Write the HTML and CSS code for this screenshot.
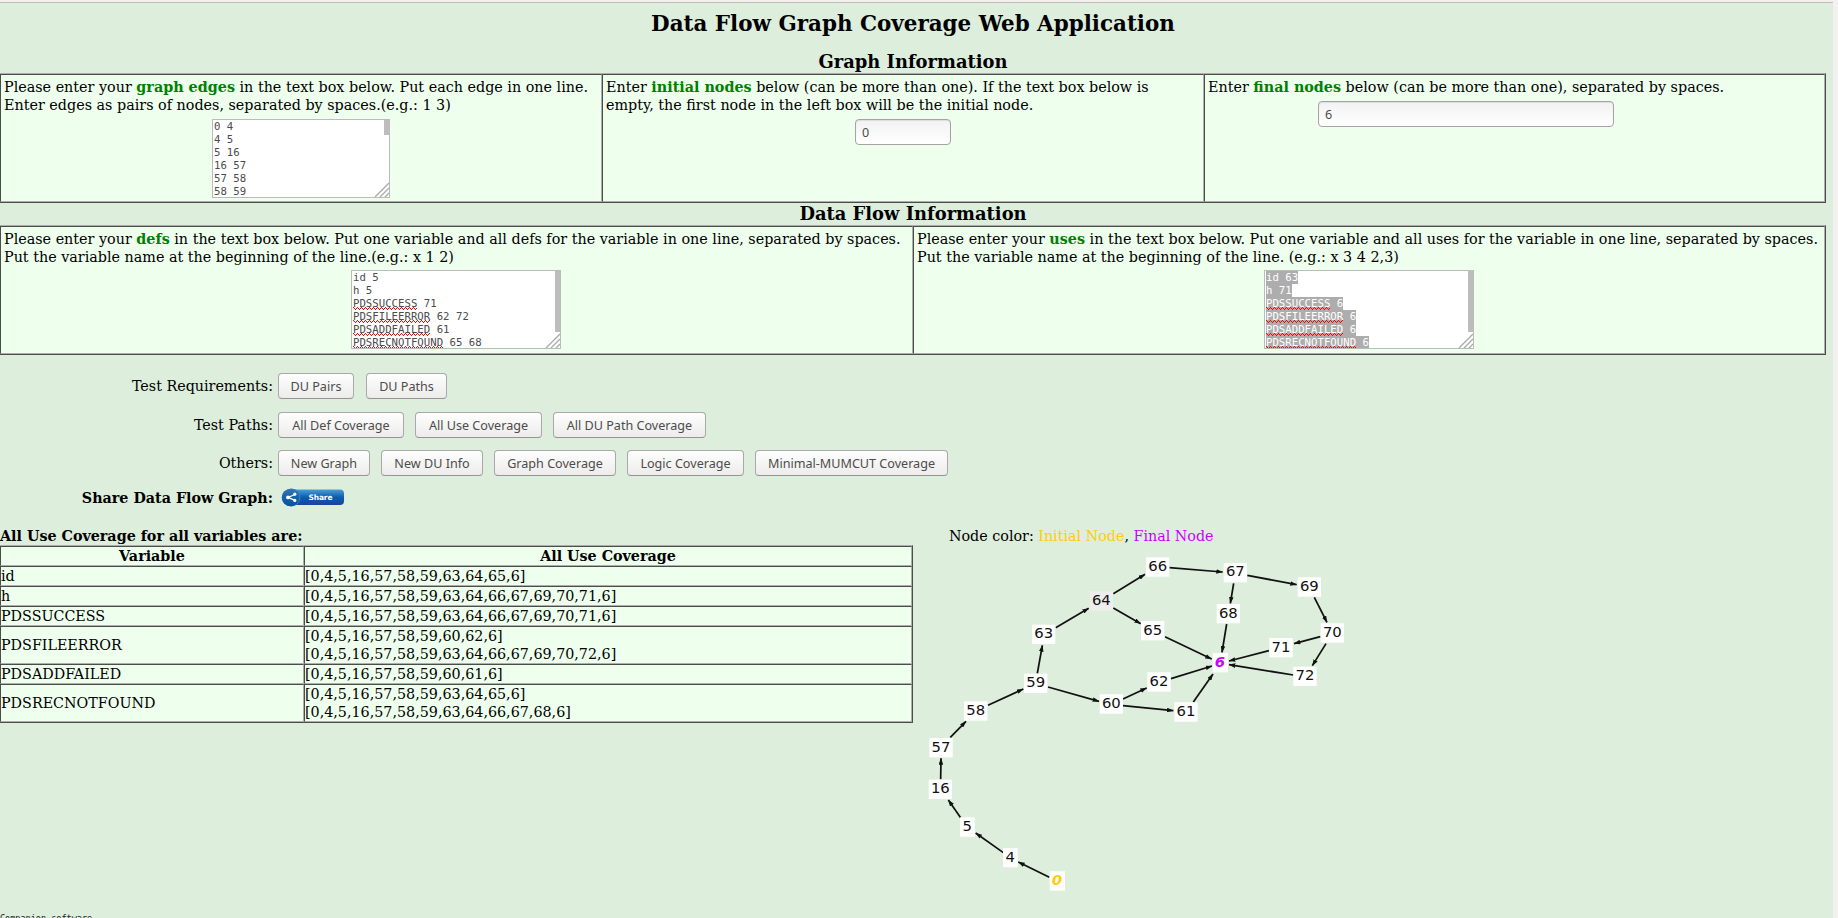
FILE: index.html
```html
<!DOCTYPE html>
<html lang="en">
<head>
<meta charset="utf-8">
<title>Data Flow Graph Coverage Web Application</title>
<link rel="stylesheet" href="styles.css">
</head>
<body>
<div class="window">
<main class="page">
  <h2 class="title">Data Flow Graph Coverage Web Application</h2>
  <h3 class="section graph-title">Graph Information</h3>
  <table class="grid inputs">
    <colgroup><col class="c-edges"><col class="c-init"><col></colgroup>
    <tr>
      <td>Please enter your <b class="key">graph edges</b> in the text box below. Put each edge in one line.<br>Enter edges as pairs of nodes, separated by spaces.(e.g.: 1 3)
        <div class="area edges"><div>0 4</div><div>4 5</div><div>5 16</div><div>16 57</div><div>57 58</div><div>58 59</div><i class="thumb short"></i><svg class="grip" viewBox="0 0 15 15"><path d="M1 15L15 1M6 15l9-9M11 15l4-4"/></svg></div></td>
      <td>Enter <b class="key">initial nodes</b> below (can be more than one). If the text box below is<br>empty, the first node in the left box will be the initial node.
        <div class="field init">0</div></td>
      <td>Enter <b class="key">final nodes</b> below (can be more than one), separated by spaces.
        <div class="field final">6</div></td>
    </tr>
  </table>
  <h3 class="section flow-title">Data Flow Information</h3>
  <table class="grid inputs">
    <colgroup><col class="c-defs"><col></colgroup>
    <tr>
      <td>Please enter your <b class="key">defs</b> in the text box below. Put one variable and all defs for the variable in one line, separated by spaces.<br>Put the variable name at the beginning of the line.(e.g.: x 1 2)
        <div class="area defs"><div>id 5</div><div>h 5</div><div><u>PDSSUCCESS</u> 71</div><div><u>PDSFILEERROR</u> 62 72</div><div><u>PDSADDFAILED</u> 61</div><div><u>PDSRECNOTFOUND</u> 65 68</div><i class="thumb"></i><svg class="grip" viewBox="0 0 15 15"><path d="M1 15L15 1M6 15l9-9M11 15l4-4"/></svg></div></td>
      <td>Please enter your <b class="key">uses</b> in the text box below. Put one variable and all uses for the variable in one line, separated by spaces.<br>Put the variable name at the beginning of the line. (e.g.: x 3 4 2,3)
        <div class="area uses"><div><span>id 63</span></div><div><span>h 71</span></div><div><span><u>PDSSUCCESS</u> 6</span></div><div><span><u>PDSFILEERROR</u> 6</span></div><div><span><u>PDSADDFAILED</u> 6</span></div><div><span><u>PDSRECNOTFOUND</u> 6</span></div><i class="thumb"></i><svg class="grip" viewBox="0 0 15 15"><path d="M1 15L15 1M6 15l9-9M11 15l4-4"/></svg></div></td>
    </tr>
  </table>

  <div class="actions">
    <div class="row r1"><span class="label">Test Requirements:</span><button class="w76">DU Pairs</button><button class="w81 wide-gap">DU Paths</button></div>
    <div class="row r2"><span class="label">Test Paths:</span><button class="w126">All Def Coverage</button><button class="w127">All Use Coverage</button><button class="w153">All DU Path Coverage</button></div>
    <div class="row r3"><span class="label">Others:</span><button class="w92">New Graph</button><button class="w102">New DU Info</button><button class="w122">Graph Coverage</button><button class="w117">Logic Coverage</button><button class="w193">Minimal-MUMCUT Coverage</button></div>
    <div class="row r4"><b class="label">Share Data Flow Graph:</b>
      <svg class="share" width="64" height="19" viewBox="0 0 64 19">
        <defs><linearGradient id="blue" x1="0" y1="0" x2="0" y2="1"><stop offset="0" stop-color="#4a9fd6"/><stop offset=".5" stop-color="#0c5cae"/><stop offset="1" stop-color="#1a449c"/></linearGradient>
        <linearGradient id="disc" x1="0" y1="0" x2="0" y2="1"><stop offset="0" stop-color="#3d74b5"/><stop offset=".45" stop-color="#1263ae"/><stop offset="1" stop-color="#0f4ea2"/></linearGradient></defs>
        <rect x="6" y="1.5" width="57" height="15.5" rx="4" fill="url(#blue)"/>
        <circle cx="10.5" cy="9.5" r="9" fill="#2c80c4"/><circle cx="9.5" cy="9.5" r="8.8" fill="url(#disc)"/>
        <path d="M14.5 6.2L7 9.4 14.5 12.6" stroke="#fff" stroke-width="1.2" fill="none"/><circle cx="13.8" cy="6.2" r="1.6" fill="#fff"/><circle cx="7" cy="9.4" r="1.9" fill="#fff"/><circle cx="13.8" cy="12.4" r="1.6" fill="#fff"/>
        <text x="27.5" y="11.5" textLength="24">Share</text>
      </svg></div>
  </div>

  <div class="results">
    <section class="coverage">
      <b class="caption">All Use Coverage for all variables are:</b>
      <table class="grid paths">
        <colgroup><col class="c-var"><col></colgroup>
        <tr><th>Variable</th><th>All Use Coverage</th></tr>
        <tr><td>id</td><td>[0,4,5,16,57,58,59,63,64,65,6]</td></tr>
        <tr><td>h</td><td>[0,4,5,16,57,58,59,63,64,66,67,69,70,71,6]</td></tr>
        <tr><td>PDSSUCCESS</td><td>[0,4,5,16,57,58,59,63,64,66,67,69,70,71,6]</td></tr>
        <tr><td>PDSFILEERROR</td><td>[0,4,5,16,57,58,59,60,62,6]<br>[0,4,5,16,57,58,59,63,64,66,67,69,70,72,6]</td></tr>
        <tr><td>PDSADDFAILED</td><td>[0,4,5,16,57,58,59,60,61,6]</td></tr>
        <tr><td>PDSRECNOTFOUND</td><td>[0,4,5,16,57,58,59,63,64,65,6]<br>[0,4,5,16,57,58,59,63,64,66,67,68,6]</td></tr>
      </table>
    </section>
    <section class="graph">
      <div class="legend">Node color: <span class="gold">Initial Node</span>, <span class="violet">Final Node</span></div>
      <svg class="canvas" width="446" height="368" viewBox="42 105 1338 1104">
        <defs><marker id="tip" viewBox="0 0 20 14" refX="19" refY="7" markerWidth="20" markerHeight="14" markerUnits="userSpaceOnUse" orient="auto"><path d="M0 0L20 7L0 14Z" fill="#111"/></marker></defs>
        <g class="edge">
          <path d="M640 236L735 178"/><path d="M808 158L968 171"/><path d="M1042 181L1190 209"/><path d="M1001 205L991 265"/>
          <path d="M980 327L966 412"/><path d="M1243 247L1281 322"/><path d="M1261 365L1182 386"/><path d="M1278 386L1237 452"/>
          <path d="M1107 407L987 438"/><path d="M1180 480L987 449"/><path d="M795 365L935 432"/><path d="M640 279L722 326"/>
          <path d="M467 338L566 280"/><path d="M412 475L427 391"/><path d="M444 516L597 559"/><path d="M669 552L740 519"/>
          <path d="M669 572L820 587"/><path d="M813 491L936 453"/><path d="M880 561L939 477"/><path d="M264 571L370 522"/>
          <path d="M151 667L198 619"/><path d="M122 793L123 730"/><path d="M182 908L145 855"/><path d="M310 1013L227 954"/><path d="M448 1087L355 1041"/>
        </g>
        <g class="box">
          <rect x="738" y="127" width="70" height="58"/><rect x="971" y="144" width="70" height="58"/><rect x="1193" y="187" width="70" height="58"/>
          <rect class="hover" x="569" y="229" width="70" height="58"/><rect x="950" y="267" width="70" height="58"/><rect x="723" y="318" width="70" height="58"/>
          <rect x="396" y="329" width="70" height="58"/><rect x="1262" y="325" width="70" height="58"/><rect x="1108" y="369" width="70" height="58"/>
          <rect x="938" y="414" width="46" height="58"/><rect x="742" y="472" width="70" height="58"/><rect x="1180" y="455" width="70" height="58"/>
          <rect x="372" y="476" width="70" height="58"/><rect x="599" y="538" width="70" height="58"/><rect x="823" y="562" width="70" height="58"/>
          <rect x="192" y="559" width="70" height="58"/><rect x="88" y="669" width="70" height="58"/><rect x="86" y="794" width="70" height="58"/>
          <rect x="180" y="907" width="44" height="58"/><rect x="309" y="999" width="44" height="58"/><rect x="449" y="1069" width="46" height="58"/>
        </g>
        <g class="node">
          <text x="773" y="168">66</text><text x="1006" y="184">67</text><text x="1228" y="227">69</text><text x="604" y="270">64</text>
          <text x="985" y="308">68</text><text x="758" y="359">65</text><text x="431" y="370">63</text><text x="1297" y="367">70</text>
          <text x="1143" y="410">71</text><text x="777" y="514">62</text><text x="1215" y="496">72</text><text x="407" y="516">59</text>
          <text x="634" y="579">60</text><text x="858" y="603">61</text><text x="227" y="600">58</text><text x="123" y="710">57</text>
          <text x="121" y="835">16</text><text x="202" y="949">5</text><text x="331" y="1041">4</text>
          <text class="end" x="960" y="456">6</text><text class="start" x="471" y="1110">0</text>
        </g>
      </svg>
    </section>
  </div>
  <footer class="footer">Companion software</footer>
</main>
</div>
</body>
</html>
```
FILE: styles.css
```css
* { box-sizing: border-box; }
body { margin: 0; background: #f2f1f0; overflow: hidden; }
.window { width: 1838px; height: 918px; padding: 2px 5px 0 0; overflow: hidden; }
.page { height: 916px; border-top: 1px solid #bfbcb8; background: #ddeedd; color: #000; font: 14.3px/18px "DejaVu Serif", serif; overflow: hidden; }
.title { width: 1826px; margin: 0; padding-top: 7px; text-align: center; font-size: 21.45px; line-height: 28px; }
.section { width: 1826px; margin: 0; text-align: center; font-size: 17.9px; line-height: 22px; }
.graph-title { padding-top: 13px; }
.flow-title { height: 22px; }
.grid { border-collapse: separate; border-spacing: 0; border: 1px solid #4c4c4c; border-top-color: #aeaeae; border-left-color: #aeaeae; table-layout: fixed; width: 1827px; margin-left: -1px; background: #eeffee; }
.grid td, .grid th { border: 1px solid #aeaeae; border-top-color: #4c4c4c; border-left-color: #4c4c4c; padding: 0; }
.inputs { height: 130px; }
.inputs td { padding: 3px; vertical-align: top; white-space: nowrap; font-size: 14.33px; }
.c-edges, .c-init { width: 602px; }
.c-defs { width: 913px; }
.c-var { width: 304px; }
.key { color: #008000; }
.area { position: relative; height: 79px; margin: 5px auto 0; padding: 0 1px; border: 1px solid #bbb; background: #fff; color: #4c4c4c; font: 10.7px/13px "DejaVu Sans Mono", monospace; overflow: hidden; }
.area div { height: 13px; }
.edges { width: 178px; }
.defs, .uses { width: 210px; margin-top: 4px; }
.defs { margin-left: 347px; }
/* spelling squiggle: a three-row zigzag repeating every 4px */
.area u {
  display: inline-block; height: 13px; vertical-align: top; text-decoration: none;
  background:
    linear-gradient(90deg, #f00 1px, transparent 1px) 0 10px / 4px 1px repeat-x,
    linear-gradient(90deg, #f00 1px, transparent 1px) 1px 11px / 2px 1px repeat-x,
    linear-gradient(90deg, #f00 1px, transparent 1px) 2px 12px / 4px 1px repeat-x;
}
.uses span { display: inline-block; height: 13px; vertical-align: top; background: #adadad; color: #fff; }
.thumb { position: absolute; right: 0; top: 0; width: 5px; height: 61px; background: #bdbdbd; }
.thumb.short { height: 15px; }
.grip { position: absolute; right: 0; bottom: 0; width: 15px; height: 15px; stroke: #aaa; stroke-width: 1.4; fill: none; }
.field { height: 26px; margin-top: 5px; padding: 1px 6px 0; border: 1px solid #a5a3a5; border-radius: 4px; background: linear-gradient(#f3f2f3, #fff); box-shadow: inset 0 1px 1px #ddd; color: #4c4c4c; font: 12.6px/24px "Noto Sans", sans-serif; }
.init { width: 96px; margin-left: 249px; }
.final { width: 296px; margin-left: 110px; }
.actions { padding-top: 18px; }
.row { display: flex; align-items: center; gap: 11px; }
.label { width: 273px; margin-right: -6px; text-align: right; white-space: nowrap; }
.row button { height: 26px; padding: 1px 0 0; border: 1px solid #aaa8aa; border-bottom-color: #969296; border-radius: 4px; background: linear-gradient(#fefefe, #edeceb); color: #4c4c4c; font: 12.6px/23px "Noto Sans", sans-serif; white-space: nowrap; }
.row .wide-gap { margin-left: 1px; }
.r1 { margin-bottom: 13px; }
.r2 { margin-bottom: 12px; }
.r4 { margin-top: 11px; }
.r4 .label { padding-top: 2px; }
.share { margin-left: 3px; }
.share text { font: bold 7.5px "DejaVu Sans", sans-serif; fill: #fff; }
.w76 { width: 76px; }
.w81 { width: 81px; }
.w92 { width: 92px; }
.w102 { width: 102px; }
.w117 { width: 117px; }
.w122 { width: 122px; }
.w126 { width: 126px; }
.w127 { width: 127px; }
.w153 { width: 153px; }
.w193 { width: 193px; }
.results { display: flex; height: 386px; margin-top: 20px; }
.coverage { width: 914px; }
.caption { display: block; }
.paths { width: 914px; }
.legend { padding-left: 35px; }
.gold { color: #ffcc11; }
.violet { color: #cc00ff; }
.canvas { display: block; margin-top: 5px; }
.edge { stroke: #111; stroke-width: 5.2; }
.edge path { marker-end: url(#tip); }
#tip path { stroke: none; }
.box { fill: #fff; }
.box .hover { fill: #eeeeee; }
.node { font: 44.5px "DejaVu Sans", sans-serif; text-anchor: middle; fill: #111; }
.node .end { fill: #cc00ff; font-weight: bold; font-style: italic; }
.node .start { fill: #ffcc11; font-weight: bold; font-style: italic; }
.footer { font: 8.5px/10px "DejaVu Sans Mono", monospace; color: #222; }
```
